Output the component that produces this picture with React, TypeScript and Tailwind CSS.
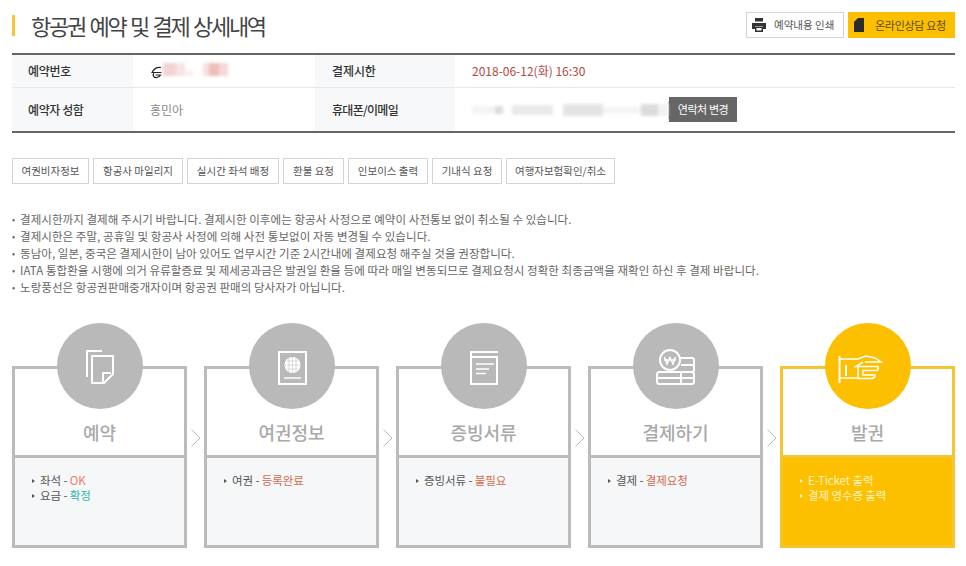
import { ReactNode } from "react";

const tabs = [
  { label: "여권비자정보", width: "w-[77px]" },
  { label: "항공사 마일리지", width: "w-[90px]" },
  { label: "실시간 좌석 배정", width: "w-[92px]" },
  { label: "환불 요청", width: "w-[61px]" },
  { label: "인보이스 출력", width: "w-[80px]" },
  { label: "기내식 요청", width: "w-[70px]" },
  { label: "여행자보험확인/취소", width: "w-[109px]" },
];

const notes = [
  "결제시한까지 결제해 주시기 바랍니다. 결제시한 이후에는 항공사 사정으로 예약이 사전통보 없이 취소될 수 있습니다.",
  "결제시한은 주말, 공휴일 및 항공사 사정에 의해 사전 통보없이 자동 변경될 수 있습니다.",
  "동남아, 일본, 중국은 결제시한이 남아 있어도 업무시간 기준 2시간내에 결제요청 해주실 것을 권장합니다.",
  "IATA 통합환율 시행에 의거 유류할증료 및 제세공과금은 발권일 환율 등에 따라 매일 변동되므로 결제요청시 정확한 최종금액을 재확인 하신 후 결제 바랍니다.",
  "노랑풍선은 항공권판매중개자이며 항공권 판매의 당사자가 아닙니다.",
];

const DocIcon = () => (
  <svg width="86" height="86" fill="none" stroke="#fff" strokeWidth="2">
    <path d="M45 28H30V54" />
    <path d="M35 33H56V51L47 60H35Z" />
    <path d="M54 50H46V59" />
  </svg>
);

const PassportIcon = () => (
  <svg width="86" height="86" fill="none" stroke="#fff" strokeWidth="2">
    <rect x="30" y="29" width="27" height="32" />
    <circle cx="43.5" cy="42" r="8" fill="#fff" stroke="none" />
    <path d="M36 42H51M43.5 34V50M38 38H49M38 46H49M40 35V49M47 35V49" stroke="#b9b9b9" strokeWidth="0.5" />
    <path d="M35 55H52" strokeWidth="1.5" />
  </svg>
);

const BookIcon = () => (
  <svg width="86" height="86" fill="none" stroke="#fff" strokeWidth="2">
    <path d="M57 29H30V61H56V34H30" />
    <path d="M35 41H53M35 46H48M35 50.5H45" strokeWidth="1.5" />
  </svg>
);

const CoinIcon = () => (
  <svg width="86" height="86" fill="none" stroke="#fff" strokeWidth="2">
    <circle cx="37" cy="37" r="10" />
    <path d="M31.5 34L34 41L37 34.5L40 41L42.5 34M31 37H43" strokeWidth="1.5" />
    <path d="M47 35H59Q61 35 61 37V47Q61 49 59 49H45M48 42H61" />
    <rect x="24" y="49" width="37" height="12" rx="2.5" />
    <path d="M24 55H61M48 49V61" />
  </svg>
);

const HandIcon = () => (
  <svg width="86" height="86" fill="none" stroke="#fff" strokeWidth="1.5">
    <path d="M14.5 33V60" strokeWidth="2" />
    <path d="M15 36H33L41 33L50 35L56 39H40" />
    <path d="M15 55H33V44" />
    <path d="M21 42V53" strokeWidth="2" />
    <path d="M38 39L31 43.5H53Q54 46 52 47.5H38V52H50Q50 55 47 55.5H33" />
  </svg>
);

const Line = ({ label, value, color }: { label: string; value?: string; color?: string }) => (
  <li className="flex items-center h-[15px]">
    <span className="w-0 h-0 border-y-[2.5px] border-y-transparent border-l-[3px] border-l-current mr-[5px]" />
    <span>{label}</span>
    {value && <span>&nbsp;-&nbsp;</span>}
    {value && <span className={color}>{value}</span>}
  </li>
);

const Chevron = () => (
  <div className="w-[17px] shrink-0 pt-[63px] flex justify-center">
    <svg width="10" height="18" fill="none" stroke="#bdbdbd" strokeWidth="1">
      <path d="M0.5 0.5L9 9L0.5 17.5" />
    </svg>
  </div>
);

const Step = ({ title, icon, active, children }: { title: string; icon: ReactNode; active?: boolean; children: ReactNode }) => (
  <div className={`relative w-[175px] h-[182px] shrink-0 border-[3px] flex flex-col ${active ? "border-[#f2c531]" : "border-[#bbbbbb]"}`}>
    <div className={`absolute left-1/2 -translate-x-1/2 -top-[46px] w-[86px] h-[86px] rounded-full ${active ? "bg-[#fdc000]" : "bg-[#b9b9b9]"}`}>
      {icon}
    </div>
    <div className="h-[86px] shrink-0 flex items-end justify-center pb-[10px] bg-white text-[18px] leading-[26px] font-medium text-[#a9a9a9]">
      {title}
    </div>
    <ul className={`flex-1 border-t-[3px] pt-[15px] pl-[17px] text-[11.5px] tracking-[-0.1px] ${active ? "bg-[#fdc000] border-[#f2c531] text-[#fff3c4]" : "bg-[#f6f7f9] border-[#bbbbbb] text-[#555555]"}`}>
      {children}
    </ul>
  </div>
);

export default function App() {
  return (
    <div className="w-[966px] h-[566px] overflow-hidden bg-white px-[12px] font-['Noto_Sans_CJK_KR',sans-serif]">
      <div className="w-[943px]">
        <header className="h-[53px] flex items-start justify-between">
          <div className="flex items-center mt-[15px] h-[21px]">
            <span className="w-[3px] h-[21px] bg-[#f5c43a]" />
            <h1 className="ml-[16px] text-[22px] leading-[21px] tracking-[-2.3px] [word-spacing:2px] text-[#444444]">항공권 예약 및 결제 상세내역</h1>
          </div>
          <div className="flex gap-[4px] mt-[12px]">
            <button className="w-[98px] h-[26px] border border-[#d4d4d4] bg-white flex items-center pl-[5px] text-[10.5px] text-[#555555]">
              <svg width="14" height="14" viewBox="0 0 14 14" fill="#333333">
                <rect x="3" y="0" width="8" height="3.5" />
                <path d="M0 5H14V11H11V8H3V11H0Z" />
                <path d="M3 8.5H11V14H3ZM4.5 10V12.5H9.5V10Z" fillRule="evenodd" />
              </svg>
              <span className="ml-[8px]">예약내용 인쇄</span>
            </button>
            <button className="w-[107px] h-[26px] bg-[#fdc000] flex items-center pl-[6px] text-[11px] tracking-[-0.3px] text-[#5a4a10]">
              <svg width="10" height="14" viewBox="0 0 10 14" fill="#2b2b2b">
                <path d="M4 0H10V14H0V4Z" />
              </svg>
              <span className="ml-[11px]">온라인상담 요청</span>
            </button>
          </div>
        </header>

        <div className="border-y-2 border-[#666666] text-[12px]">
          <div className="flex h-[33px] border-b border-[#e8e8e8]">
            <div className="w-[121px] pl-[16px] bg-[#f7f8f9] flex items-center font-medium tracking-[-0.3px] text-[#333333]">예약번호</div>
            <div className="w-[182px] pl-[18px] flex items-center">
              <svg width="11" height="13" viewBox="0 0 11 13" fill="none" stroke="#222222" strokeWidth="1.2" className="mt-[3px]">
                <path d="M10 1.5C6 1 2.5 3.5 1 6.5H10.5M3 6.5C1 9.5 3 12 6 11.5C8 11 9 10 9.5 9H4.5" />
              </svg>
              <span className="ml-[1px] -mt-[4px] flex h-[13px] blur-[1.5px]">
                <span className="w-[13px] bg-[#f3d3d6]" />
                <span className="w-[9px] bg-[#f8e3e5]" />
                <span className="w-[8px] mt-[7px] bg-[#fbeff0]" />
              </span>
              <span className="ml-[10px] -mt-[4px] flex h-[13px] blur-[1.5px]">
                <span className="w-[6px] bg-[#f8e0e0]" />
                <span className="w-[10px] bg-[#eebfba]" />
                <span className="w-[9px] bg-[#f6d8d8]" />
              </span>
            </div>
            <div className="w-[140px] pl-[17px] bg-[#f7f8f9] flex items-center font-medium tracking-[-0.1px] text-[#333333]">결제시한</div>
            <div className="flex-1 pl-[17px] flex items-center text-[#b5483f]">2018-06-12(화) 16:30</div>
          </div>
          <div className="flex h-[43px]">
            <div className="w-[121px] pl-[16px] bg-[#f7f8f9] flex items-center font-medium tracking-[-0.4px] text-[#333333]">예약자 성함</div>
            <div className="w-[182px] pl-[17px] flex items-center text-[#888888]">홍민아</div>
            <div className="w-[140px] pl-[17px] bg-[#f7f8f9] flex items-center font-medium tracking-[-0.7px] text-[#333333]">휴대폰/이메일</div>
            <div className="flex-1 pl-[17px] flex items-center">
              <span className="flex items-center h-[12px] blur-[1.5px]">
                <span className="w-[23px] h-[8px] bg-[#f4f4f4]" />
                <span className="w-[8px] h-[8px] bg-[#dddddd]" />
                <span className="w-[9px] h-[8px] bg-white" />
                <span className="w-[41px] h-[10px] bg-[#eaeaea]" />
                <span className="w-[10px] h-[8px] bg-white" />
                <span className="w-[40px] h-[12px] bg-[#e4e4e4]" />
                <span className="w-[38px] h-[6px] bg-[#f4f4f4]" />
                <span className="w-[17px] h-[12px] bg-[#dcdcdc]" />
                <span className="w-[10px] h-[12px] bg-[#f2f2f2]" />
              </span>
              <span className="w-px h-[18px] bg-[#cccccc]" />
              <button className="w-[68px] h-[25px] bg-[#666666] text-white text-[11px] tracking-[-0.4px]">연락처 변경</button>
            </div>
          </div>
        </div>

        <div className="flex gap-[4px] mt-[25px]">
          {tabs.map((tab) => (
            <button key={tab.label} className={`${tab.width} h-[26px] border border-[#d4d4d4] bg-white text-[10.5px] text-[#555555]`}>
              {tab.label}
            </button>
          ))}
        </div>

        <ul className="mt-[27px] text-[11.5px] leading-[17px] tracking-[0.06px] text-[#666666]">
          {notes.map((note) => (
            <li key={note} className="flex whitespace-nowrap">
              <span className="w-[8px] shrink-0 text-[9px]">•</span>
              <span>{note}</span>
            </li>
          ))}
        </ul>

        <div className="flex mt-[70px]">
          <Step title="예약" icon={<DocIcon />}>
            <Line label="좌석" value="OK" color="text-[#e8806a]" />
            <Line label="요금" value="확정" color="text-[#2cb5a5]" />
          </Step>
          <Chevron />
          <Step title="여권정보" icon={<PassportIcon />}>
            <Line label="여권" value="등록완료" color="text-[#d8694a]" />
          </Step>
          <Chevron />
          <Step title="증빙서류" icon={<BookIcon />}>
            <Line label="증빙서류" value="불필요" color="text-[#d8694a]" />
          </Step>
          <Chevron />
          <Step title="결제하기" icon={<CoinIcon />}>
            <Line label="결제" value="결제요청" color="text-[#d8694a]" />
          </Step>
          <Chevron />
          <Step title="발권" icon={<HandIcon />} active>
            <Line label="E-Ticket 출력" />
            <Line label="결제 영수증 출력" />
          </Step>
        </div>
      </div>
    </div>
  );
}
